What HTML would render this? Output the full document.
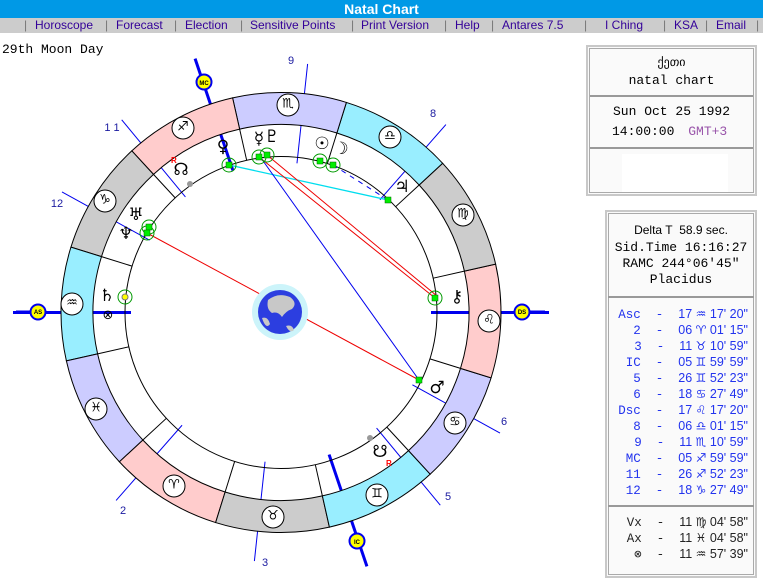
<!DOCTYPE html>
<html><head><meta charset="utf-8">
<style>
*{margin:0;padding:0;box-sizing:border-box}
body{width:763px;height:586px;background:#fff;position:relative;overflow:hidden;font-family:"Liberation Sans",sans-serif}
#title{position:absolute;left:0;top:0;width:763px;height:18px;background:#0099e6;color:#fff;font-weight:bold;font-size:14px;text-align:center;line-height:18px}
#nav{position:absolute;left:0;top:18px;width:763px;height:15px;background:#cccccc;font-size:12px;line-height:15px;color:#330099;white-space:nowrap}
#nav span{position:absolute;top:0}
.sep{color:#777}
#moon{position:absolute;left:2px;top:42px;font-family:"Liberation Mono",monospace;font-size:13px}
.box{position:absolute;border:2px solid #c8c8c8;background:#fafafa;outline:1px solid #aaa;outline-offset:-4px}
.mono{font-family:"Liberation Mono",monospace;font-size:12.5px}
.row{position:absolute;white-space:nowrap;font-size:13px}
.hr{position:absolute;height:2px;background:#999}
svg{position:absolute;left:0;top:0}
.g{font-family:"DejaVu Sans",sans-serif}
.z{font-family:"DejaVu Sans",sans-serif;font-size:12px;line-height:16px}
.lst div{height:16px;line-height:16px;overflow:hidden}
</style></head><body>
<div id="title">Natal Chart</div>
<div id="nav">
<span class="sep" style="left:24px">|</span><span style="left:35px">Horoscope</span>
<span class="sep" style="left:105px">|</span><span style="left:116px">Forecast</span>
<span class="sep" style="left:174px">|</span><span style="left:185px">Election</span>
<span class="sep" style="left:240px">|</span><span style="left:250px">Sensitive Points</span>
<span class="sep" style="left:351px">|</span><span style="left:361px">Print Version</span>
<span class="sep" style="left:444px">|</span><span style="left:455px">Help</span>
<span class="sep" style="left:491px">|</span><span style="left:502px">Antares 7.5</span>
<span class="sep" style="left:584px">|</span><span style="left:605px">I Ching</span>
<span class="sep" style="left:663px">|</span><span style="left:674px">KSA</span>
<span class="sep" style="left:705px">|</span><span style="left:716px">Email</span>
<span class="sep" style="left:756px">|</span>
</div>
<div id="moon">29th Moon Day</div>

<svg id="chart" width="763" height="586" viewBox="0 0 763 586"></svg>
<svg width="763" height="586" viewBox="0 0 763 586">
<g class="g" font-size="13" text-anchor="middle" dominant-baseline="central" fill="#000">
<text x="174" y="485">♈&#xFE0E;</text><text x="273" y="516">♉&#xFE0E;</text><text x="377" y="494">♊&#xFE0E;</text>
<text x="455" y="422">♋&#xFE0E;</text><text x="489" y="320">♌&#xFE0E;</text><text x="463" y="214">♍&#xFE0E;</text>
<text x="390" y="136">♎&#xFE0E;</text><text x="288" y="104">♏&#xFE0E;</text><text x="183" y="127">♐&#xFE0E;</text>
<text x="105" y="200">♑&#xFE0E;</text><text x="72" y="303">♒&#xFE0E;</text><text x="96" y="408">♓&#xFE0E;</text>
</g>
<g class="g" font-size="17" text-anchor="middle" dominant-baseline="central" fill="#000" font-weight="bold">
<text x="223" y="147">♀&#xFE0E;</text><text x="259" y="139">☿&#xFE0E;</text><text x="272" y="137">♇&#xFE0E;</text>
<text x="322" y="144">☉&#xFE0E;</text><text x="341" y="149">☽&#xFE0E;</text><text x="402" y="187">♃&#xFE0E;</text>
<text x="457" y="297">⚷&#xFE0E;</text><text x="437" y="388">♂&#xFE0E;</text>
<text x="181" y="170">☊&#xFE0E;</text><text x="380" y="452">☋&#xFE0E;</text>
<text x="136" y="215">♅&#xFE0E;</text><text x="126" y="234">♆&#xFE0E;</text><text x="107" y="296">♄&#xFE0E;</text>
</g>
<text x="108" y="319" font-size="13" text-anchor="middle" class="g">⊗</text>
<g font-family="Liberation Sans" font-size="8" fill="#f00" font-weight="bold"><text x="171" y="163">R</text><text x="386" y="466">R</text></g>
<g font-family="Liberation Sans" font-size="11" fill="#1a1aa0" text-anchor="middle">
<text x="291" y="64">9</text><text x="433" y="117">8</text><text x="112" y="131">1 1</text><text x="57" y="207">12</text>
<text x="123" y="514">2</text><text x="265" y="566">3</text><text x="448" y="500">5</text><text x="504" y="425">6</text>
</g>
<g font-family="Liberation Sans" font-size="6" font-weight="bold" text-anchor="middle" fill="#000">
<text x="38" y="314">AS</text><text x="522" y="314">DS</text><text x="204" y="85">MC</text><text x="357" y="544">IC</text>
</g>
</svg>
<script>
(function(){
var s=document.getElementById('chart'),cx=281,cy=312.5,h='';
function P(r,l){var t=(l-137.29)*Math.PI/180;return [cx+r*Math.cos(t),cy-r*Math.sin(t)];}
function ln(r1,r2,l,c,w){var a=P(r1,l),b=P(r2,l);h+='<line x1="'+a[0]+'" y1="'+a[1]+'" x2="'+b[0]+'" y2="'+b[1]+'" stroke="'+c+'" stroke-width="'+w+'"/>';}
var cus=[317.29,6.02,41.18,65.99,86.87,108.46,137.29,186.02,221.18,245.99,266.87,288.46];
cus.forEach(function(c,i){if(i%3)ln(150,250,c,'#0000ee',1);});
[317.29,137.29,245.99,65.99].forEach(function(c){ln(150,268,c,'#0000ee',3);});
var cols=['#ffcccc','#cccccc','#99eeff','#ccccff'];
for(var k=0;k<12;k++){var a=k*30,b=a+30;var p1=P(220,a),p2=P(220,b),p3=P(188,b),p4=P(188,a);
h+='<path d="M'+p1+' A220 220 0 0 0 '+p2+' L'+p3+' A188 188 0 0 1 '+p4+'Z" fill="'+cols[k%4]+'" stroke="#000" stroke-width="1"/>';
ln(156,188,a,'#000',1);}
h+='<circle cx="'+cx+'" cy="'+cy+'" r="156" fill="none" stroke="#000"/>';
var sm=[[174,485],[273,516],[377,494],[455,422],[489,320],[463,214],[390,136],[288,104],[183,127],[105,200],[72,303],[96,408]];
sm.forEach(function(q){h+='<circle cx="'+q[0]+'" cy="'+(q[1]+1)+'" r="11" fill="#fff" stroke="#000"/>';});
[[38,312],[522,312],[204,82],[357,541]].forEach(function(q){h+='<circle cx="'+q[0]+'" cy="'+q[1]+'" r="7.5" fill="#ffff00" stroke="#0000ee" stroke-width="2"/>';});
h+='<line x1="16" y1="312" x2="30" y2="312" stroke="#0000ee" stroke-width="3"/><line x1="530" y1="312" x2="545" y2="312" stroke="#0000ee" stroke-width="3"/>';
h+='<line x1="229" y1="165" x2="388" y2="200" stroke="#00ddee" stroke-width="1.3"/>';
h+='<line x1="259" y1="157" x2="435" y2="298" stroke="#ee0000"/><line x1="267" y1="155" x2="437" y2="296" stroke="#ee0000"/>';
h+='<line x1="261" y1="158" x2="419" y2="380" stroke="#0000ee"/><line x1="147" y1="233" x2="419" y2="380" stroke="#ee0000"/>';
h+='<line x1="333" y1="165" x2="388" y2="200" stroke="#0000ee" stroke-dasharray="5,5"/>';
h+='<circle cx="280" cy="312" r="28" fill="#ccf4fa"/><circle cx="280" cy="312" r="22" fill="#2c3ee0"/>';
h+='<path d="M268 300 q10 -8 22 -3 q8 6 2 12 q-6 2 -10 8 q-4 -6 -10 -4 q-6 -4 -4 -13z" fill="#c8c8c8"/><path d="M262 318 q6 -2 8 6 q-4 6 -8 -6z M286 326 q6 -2 8 4 q-4 4 -8 -4z" fill="#c8c8c8"/>';
[[229,165],[259,157],[267,155],[320,161],[333,165],[149,227],[147,233],[125,297],[435,298]].forEach(function(q){h+='<circle cx="'+q[0]+'" cy="'+q[1]+'" r="7" fill="none" stroke="#009900"/>';});
[[229,165],[259,157],[267,155],[320,161],[333,165],[149,227],[147,233],[435,298],[388,200],[419,380]].forEach(function(q){h+='<rect x="'+(q[0]-3)+'" y="'+(q[1]-3)+'" width="6" height="6" fill="#00ee00" stroke="#006600" stroke-width="0.5"/>';});
h+='<circle cx="125" cy="297" r="3" fill="#ffff00" stroke="#777"/><circle cx="190" cy="184" r="3" fill="#999"/><circle cx="370" cy="438" r="3" fill="#999"/>';
s.innerHTML=h;})();
</script>

<div class="box" style="left:586px;top:45px;width:171px;height:151px"></div>
<div class="row" style="left:586px;width:171px;top:55px;text-align:center;font-size:12px">ქეთი</div>
<div class="row mono" style="left:586px;width:171px;top:73px;text-align:center;font-size:13px">natal chart</div>
<div class="hr" style="left:590px;top:95px;width:163px"></div>
<div class="row mono" style="left:586px;width:171px;top:104px;text-align:center;font-size:13px">Sun Oct 25 1992</div>
<div class="row mono" style="left:612px;top:124px;font-size:13px">14:00:00 <span style="color:#9955aa;margin-left:6px">GMT+3</span></div>
<div class="hr" style="left:590px;top:147px;width:163px"></div>
<div style="position:absolute;left:622px;top:154px;width:106px;height:38px;background:#fff"></div>

<div class="box" style="left:605px;top:210px;width:152px;height:368px"></div>
<div class="row" style="left:605px;width:152px;top:223px;text-align:center;font-size:12px">Delta T&nbsp; 58.9 sec.</div>
<div class="row mono" style="left:605px;width:152px;top:240px;text-align:center;font-size:13px">Sid.Time 16:16:27</div>
<div class="row mono" style="left:605px;width:152px;top:256px;text-align:center;font-size:13px">RAMC 244°06'45"</div>
<div class="row mono" style="left:605px;width:152px;top:272px;text-align:center;font-size:13px">Placidus</div>
<div class="hr" style="left:608px;top:296px;width:146px"></div>
<div class="lst" style="position:absolute;left:608px;top:306px;width:140px;color:#2233ee;font-size:12.5px;text-align:right;white-space:nowrap">
<div><span class="mono">Asc&nbsp; -&nbsp; </span>17 <span class="z">♒&#xFE0E;</span> 17' 20"</div>
<div><span class="mono">2&nbsp; -&nbsp; </span>06 <span class="z">♈&#xFE0E;</span> 01' 15"</div>
<div><span class="mono">3&nbsp; -&nbsp; </span>11 <span class="z">♉&#xFE0E;</span> 10' 59"</div>
<div><span class="mono">IC&nbsp; -&nbsp; </span>05 <span class="z">♊&#xFE0E;</span> 59' 59"</div>
<div><span class="mono">5&nbsp; -&nbsp; </span>26 <span class="z">♊&#xFE0E;</span> 52' 23"</div>
<div><span class="mono">6&nbsp; -&nbsp; </span>18 <span class="z">♋&#xFE0E;</span> 27' 49"</div>
<div><span class="mono">Dsc&nbsp; -&nbsp; </span>17 <span class="z">♌&#xFE0E;</span> 17' 20"</div>
<div><span class="mono">8&nbsp; -&nbsp; </span>06 <span class="z">♎&#xFE0E;</span> 01' 15"</div>
<div><span class="mono">9&nbsp; -&nbsp; </span>11 <span class="z">♏&#xFE0E;</span> 10' 59"</div>
<div><span class="mono">MC&nbsp; -&nbsp; </span>05 <span class="z">♐&#xFE0E;</span> 59' 59"</div>
<div><span class="mono">11&nbsp; -&nbsp; </span>26 <span class="z">♐&#xFE0E;</span> 52' 23"</div>
<div><span class="mono">12&nbsp; -&nbsp; </span>18 <span class="z">♑&#xFE0E;</span> 27' 49"</div>
</div>
<div class="hr" style="left:608px;top:505px;width:146px"></div>
<div class="lst" style="position:absolute;left:608px;top:514px;width:140px;color:#222;font-size:12.5px;text-align:right;white-space:nowrap">
<div><span class="mono">Vx&nbsp; -&nbsp; </span>11 <span class="z">♍&#xFE0E;</span> 04' 58"</div>
<div><span class="mono">Ax&nbsp; -&nbsp; </span>11 <span class="z">♓&#xFE0E;</span> 04' 58"</div>
<div><span class="mono">⊗&nbsp; -&nbsp; </span>11 <span class="z">♒&#xFE0E;</span> 57' 39"</div>
</div>
</body></html>
